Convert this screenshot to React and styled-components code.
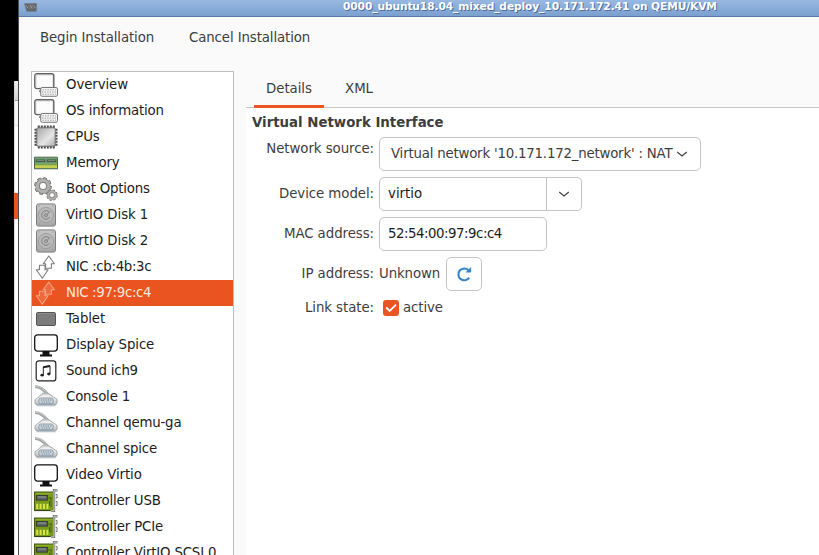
import React from 'react';
import styled, { createGlobalStyle } from 'styled-components';

const ORANGE = '#e95420';

const GlobalStyle = createGlobalStyle`
  * { box-sizing: border-box; }
  html, body { margin: 0; padding: 0; overflow: hidden; }
  body {
    font-family: "DejaVu Sans", sans-serif;
    font-size: 13.333px;
    line-height: 16px;
    color: #3d3d3d;
    white-space: nowrap;
  }
  svg { display: block; flex: none; }
`;

const Desktop = styled.div`
  display: flex;
  width: 819px;
  height: 555px;
  overflow: hidden;
  background: #000;
`;

const Backdrop = styled.div`
  width: 14px;
  flex: none;
  background: #000;
`;

const RearWindow = styled.div`
  width: 4px;
  flex: none;
  display: flex;
  flex-direction: column;
  margin-top: 81px;
  border-left: 1px solid #d8d8d8;
  background: #fff;
`;

const RearTitle = styled.div`
  height: 20px;
  background: linear-gradient(#f2f2f2, #d2d2d2);
  border-bottom: 1px solid #999;
`;

const RearToolbar = styled.div`
  height: 25px;
  background: #f6f6f6;
  border-bottom: 1px solid #ddd;
`;

const RearSelection = styled.div`
  height: 26px;
  margin: 67px 0 0 -1px;
  background: ${ORANGE};
`;

const Window = styled.main`
  flex: 1;
  min-width: 0;
  display: flex;
  flex-direction: column;
  border-left: 1px solid #4c4c4c;
  background: #fafafa;
`;

const TitleBar = styled.header`
  display: flex;
  align-items: flex-start;
  height: 17px;
  flex: none;
  padding: 3px 0 0 5px;
  background: linear-gradient(#98b8e2, #7ba0cf);
  border-bottom: 1px solid #567aa5;
`;

const Title = styled.h1`
  margin: -3px 0 0 305px;
  font-size: 10.667px;
  line-height: 14px;
  font-weight: bold;
  letter-spacing: -0.11px;
  color: #fff;
  text-shadow: 1px 1px 0 #4d6c96;
`;

const Toolbar = styled.nav`
  display: flex;
  flex: none;
  height: 54px;
  padding: 13px 0 0 21px;
  gap: 35px;
`;

const ToolButton = styled.button`
  padding: 0;
  height: 16px;
  border: 0;
  background: none;
  font: inherit;
  letter-spacing: -0.11px;
  color: #3d3d3d;
`;

const Body = styled.div`
  display: flex;
  flex: 1;
  min-height: 0;
  padding-left: 12px;
`;

const DeviceList = styled.ul`
  width: 203px;
  height: 500px;
  flex: none;
  margin: 0;
  padding: 0;
  list-style: none;
  border: 1px solid #bdbdbd;
  background: #fff;
`;

const DeviceRow = styled.li`
  display: flex;
  align-items: center;
  gap: 8px;
  height: 26px;
  padding-left: 2px;
  color: ${p => (p.$selected ? '#ffe9df' : '#1c1c1c')};
  background: ${p => (p.$selected ? ORANGE : 'transparent')};
`;

const DeviceName = styled.span`
  line-height: 16px;
  letter-spacing: ${p => p.$tracking}px;
`;

const Details = styled.section`
  flex: 1;
  min-width: 0;
  margin-left: 12px;
  display: flex;
  flex-direction: column;
`;

const Tabs = styled.div`
  display: flex;
  height: 37px;
  flex: none;
  padding-left: 8px;
  border-bottom: 1px solid #c6c6c6;
`;

const Tab = styled.button`
  width: 70px;
  height: 37px;
  padding: 1px 0 0;
  border: 0;
  border-bottom: 3px solid ${p => (p.$active ? ORANGE : 'transparent')};
  background: none;
  font: inherit;
  letter-spacing: -0.05px;
  color: #3d3d3d;
`;

const Panel = styled.div`
  flex: 1;
  padding: 7px 0 0 6px;
  background: #fff;
`;

const SectionTitle = styled.h2`
  margin: 0 0 6px;
  font-size: 13.333px;
  line-height: 16px;
  font-weight: bold;
`;

const Form = styled.div`
  display: grid;
  grid-template-columns: 122px auto;
  grid-template-rows: 34px 34px 34px 34px 22px;
  column-gap: 5px;
  row-gap: 6px;
  align-items: center;
`;

const Label = styled.label`
  justify-self: end;
  padding-bottom: ${p => (p.$raised ? 11 : 0)}px;
  letter-spacing: -0.06px;
`;

const Field = styled.div`
  display: flex;
  align-items: center;
  letter-spacing: -0.1px;
`;

const Box = styled.div`
  display: flex;
  align-items: center;
  height: 34px;
  border: 1px solid #c4c4c4;
  border-radius: 5px;
  background: #fff;
`;

const Select = styled(Box)`
  width: 322px;
  padding-left: 11px;
  gap: 4px;
  letter-spacing: -0.2px;
`;

const Entry = styled(Box)`
  width: 168px;
  padding-left: 8px;
  color: #1c1c1c;
  letter-spacing: ${p => p.$tracking}px;
  border-radius: ${p => (p.$joined ? '5px 0 0 5px' : '5px')};
`;

const DropButton = styled(Box)`
  width: 35px;
  justify-content: center;
  border-left: 0;
  border-radius: 0 5px 5px 0;
`;

const IconButton = styled(Box)`
  width: 36px;
  margin-left: 6px;
  justify-content: center;
`;

const Check = styled.span`
  display: flex;
  width: 16px;
  height: 16px;
  margin: 0 4px;
  border-radius: 3px;
  background: ${ORANGE};
`;

const Chevron = () => (
  <svg width="12" height="12" viewBox="0 0 12 12" fill="none" stroke="#3d3d3d" strokeWidth="1.1">
    <path d="M1.2 4 L6 8 L10.8 4" />
  </svg>
);

const Icon = ({ children }) => (
  <svg width="24" height="24" viewBox="0 0 24 24">{children}</svg>
);

const Computer = () => (
  <Icon>
    <rect x=".8" y=".8" width="19" height="14.8" rx="2" fill="#fff" stroke="#606060" strokeWidth="1.4" />
    <rect x="2.3" y="2.3" width="16" height="11.8" fill="#fcfcfc" stroke="#ddd" strokeWidth=".6" />
    <path d="M6.5 18.2 H5" stroke="#555" strokeWidth="1.3" />
    <rect x="6.7" y="14.5" width="16.8" height="8.8" rx="1.5" fill="#f4f4f4" stroke="#777" />
    <path d="M8.5 16.8H22M8 19H22M8.5 21.2H22" stroke="#999" strokeWidth=".9" strokeDasharray="1.5 1" />
  </Icon>
);

const Cpu = () => (
  <Icon>
    <defs>
      <linearGradient id="chip" x1="0" y1="0" x2="1" y2="1">
        <stop offset="0" stopColor="#a5a5a5" /><stop offset=".6" stopColor="#e6e6e6" /><stop offset="1" stopColor="#aaa" />
      </linearGradient>
    </defs>
    <path d="M3.8 2H21M3.8 22H21" stroke="#4d4d4d" strokeWidth="3" strokeDasharray="2 1" />
    <path d="M2 3.8V21M22 3.8V21" stroke="#4d4d4d" strokeWidth="3" strokeDasharray="2 1" />
    <rect x="2.8" y="2.8" width="18.4" height="18.4" rx="1.5" fill="url(#chip)" stroke="#707070" />
  </Icon>
);

const Memory = () => (
  <Icon>
    <path d="M.5 6.2H23.5V17.8H.5Z" fill="#5f9466" stroke="#4a6b4a" />
    <path d="M1 7.3H23" stroke="#7fa67c" strokeWidth="1" />
    <path d="M2 9.8H11M13 9.8H22" stroke="#4a5a4e" strokeWidth="2.4" />
    <path d="M3 9.5H10M14 9.5H21" stroke="#788a7a" />
    <path d="M1 12.5H23" stroke="#7aa765" strokeWidth="1.4" />
    <path d="M1 15.4H23" stroke="#a3b83e" strokeWidth="3.4" />
    <path d="M1.5 15.8H23" stroke="#d9de62" strokeWidth="2.4" strokeDasharray="1.2 .8" />
  </Icon>
);

const Gear = ({ x, y, s }) => (
  <g transform={`translate(${x} ${y}) scale(${s})`}>
    <circle r="7.3" fill="none" stroke="#646462" strokeWidth="3.4" strokeDasharray="3.3 2.434" />
    <circle r="5.5" fill="none" stroke="#6b6b69" strokeWidth="4.6" />
    <circle r="5.7" fill="none" stroke="#b3b2ae" strokeWidth="3.2" />
    <circle r="7.3" fill="none" stroke="#aeada9" strokeWidth="2" strokeDasharray="1.9 3.834" strokeDashoffset="-.7" />
    <circle r="3.7" fill="#fff" stroke="#777" strokeWidth=".9" />
  </g>
);

const Gears = () => (
  <Icon><Gear x={9} y={9} s={0.98} /><Gear x={18} y={18.2} s={0.63} /></Icon>
);

const Disk = () => (
  <Icon>
    <defs>
      <linearGradient id="disk" x1="0" y1="0" x2="0" y2="1">
        <stop offset="0" stopColor="#c6c6c6" /><stop offset="1" stopColor="#a8a8a8" />
      </linearGradient>
    </defs>
    <rect x="2.5" y=".9" width="19" height="22.2" rx="2" fill="url(#disk)" stroke="#7e7e7e" />
    <circle cx="12" cy="12" r="7.6" fill="#b9b9b9" stroke="#909090" strokeWidth=".7" />
    <path d="M15.5 9.5A4.3 4.3 0 1 0 15.8 14" fill="none" stroke="#7d7d7d" />
    <path d="M12 12.5L16.5 8" stroke="#898989" />
    <circle cx="12" cy="12.2" r="1.6" fill="#a8a8a8" stroke="#777" strokeWidth=".7" />
    <path d="M4.5 3h1M18.5 3h1M4.5 21h1M18.5 21h1" stroke="#8a8a8a" />
  </Icon>
);

const Network = ({ selected }) => (
  <Icon>
    <g fill={selected ? '#ec6a3c' : '#fff'} stroke={selected ? '#f4a482' : '#7c7c7c'} strokeWidth="1.1" strokeLinejoin="round">
      <path d="M14.8 1L20.4 8.8H17.4V13.2H11.6V8.8H9.2Z" />
      <path d="M8.3 23.2L2.3 14.8H5.4V10.2H11V14.8H14.1Z" />
    </g>
  </Icon>
);

const Tablet = () => (
  <Icon>
    <rect x="2.5" y="5.5" width="19" height="13" rx="1.3" fill="#7c7c7c" stroke="#555" />
    <path d="M3.5 6.5H20.5" stroke="#8c8c8c" />
  </Icon>
);

const Monitor = () => (
  <Icon>
    <rect x=".7" y="1.9" width="22.6" height="16.2" rx="2.8" fill="#fff" stroke="#111" strokeWidth="1.3" />
    <path d="M8.5 18H15.5V21.6H18V23.6H6V21.6H8.5Z" fill="#111" />
  </Icon>
);

const Sound = () => (
  <Icon>
    <rect x="2.2" y="1.9" width="19.6" height="20" rx="2.5" fill="#fff" stroke="#222" strokeWidth="1.2" />
    <path d="M9.3 16V8L16 6.8V14.8" fill="none" stroke="#222" strokeWidth="1" />
    <path d="M9.3 8.2L16 7" stroke="#222" strokeWidth="2" />
    <ellipse cx="8.1" cy="16.2" rx="1.7" ry="1.4" fill="#222" />
    <ellipse cx="14.8" cy="15" rx="1.7" ry="1.4" fill="#222" />
  </Icon>
);

const Serial = () => (
  <Icon>
    <defs>
      <linearGradient id="plug" x1="0" y1="0" x2="0" y2="1">
        <stop offset="0" stopColor="#c9cccc" /><stop offset=".5" stopColor="#eeeeee" /><stop offset="1" stopColor="#b4b7b8" />
      </linearGradient>
    </defs>
    <path d="M1 1.6C6 1.4 9 4 13.5 9" fill="none" stroke="#a2a6a4" strokeWidth="2.8" />
    <path d="M1 1.2C6 1 9.3 3.6 13.5 8.4" fill="none" stroke="#c9cccb" strokeWidth="1" />
    <path d="M1.2 14.5C5.5 12 7.5 8 11 7.8C15 7.6 18 11.3 22.8 14Q24 18 22 19.6H2Q.3 18 1.2 14.5Z" fill="url(#plug)" stroke="#9b9f9f" strokeWidth=".9" />
    <path d="M4 13.6L9 10.2H15L20 13.6Z" fill="#f0f0ef" />
    <rect x="4.8" y="13" width="14.4" height="5.8" rx="2" fill="#ccd4db" stroke="#8494a3" strokeWidth=".9" />
    <path d="M6.8 15H18M7.6 17H17" stroke="#70859a" strokeDasharray="1.3 1" />
    <path d="M2.5 20.7H21.5" stroke="#a9bac9" strokeWidth="1.1" />
  </Icon>
);

const Card = () => (
  <Icon>
    <rect x=".5" y="3" width="19" height="18.6" fill="#789b1d" stroke="#425914" />
    <path d="M2 4.6H19" stroke="#90b130" />
    <rect x="2.4" y="6.5" width="11" height="4.6" fill="#5f6664" stroke="#343c35" />
    <path d="M4 8H12" stroke="#a4a8a4" strokeWidth=".8" />
    <path d="M13.5 9H18M15.5 12V17M17 9V18" stroke="#41601a" strokeWidth=".9" />
    <path d="M2.2 17.4H15" stroke="#d9e63e" strokeWidth="5.4" strokeDasharray="2 1.4" />
    <path d="M1 21.5H16" stroke="#34441c" />
    <path d="M23.5 1.2H20V21.8H17" fill="none" stroke="#737773" strokeWidth="2.4" />
    <path d="M23.5 1.2H20V21.8H17" fill="none" stroke="#c6cac4" strokeWidth="1" />
    <path d="M21.8 5.5H23V9H21.8M21.8 12.5H23V16.5H21.8" fill="none" stroke="#6b706b" />
  </Icon>
);

const DEVICES = [
  { name: 'Overview', glyph: Computer, tracking: -0.1 },
  { name: 'OS information', glyph: Computer, tracking: -0.16 },
  { name: 'CPUs', glyph: Cpu, tracking: -0.1 },
  { name: 'Memory', glyph: Memory, tracking: -0.1 },
  { name: 'Boot Options', glyph: Gears, tracking: -0.22 },
  { name: 'VirtIO Disk 1', glyph: Disk, tracking: -0.08 },
  { name: 'VirtIO Disk 2', glyph: Disk, tracking: -0.08 },
  { name: 'NIC :cb:4b:3c', glyph: Network, tracking: -0.32 },
  { name: 'NIC :97:9c:c4', glyph: Network, tracking: -0.33 },
  { name: 'Tablet', glyph: Tablet, tracking: -0.1 },
  { name: 'Display Spice', glyph: Monitor, tracking: -0.1 },
  { name: 'Sound ich9', glyph: Sound, tracking: -0.23 },
  { name: 'Console 1', glyph: Serial, tracking: -0.18 },
  { name: 'Channel qemu-ga', glyph: Serial, tracking: -0.21 },
  { name: 'Channel spice', glyph: Serial, tracking: -0.2 },
  { name: 'Video Virtio', glyph: Monitor, tracking: -0.07 },
  { name: 'Controller USB', glyph: Card, tracking: -0.18 },
  { name: 'Controller PCIe', glyph: Card, tracking: -0.15 },
  { name: 'Controller VirtIO SCSI 0', glyph: Card, tracking: -0.18 },
];

export default function App() {
  const selectedName = 'NIC :97:9c:c4';
  return (
    <>
      <GlobalStyle />
      <Desktop>
        <Backdrop />
        <RearWindow><RearTitle /><RearToolbar /><RearSelection /></RearWindow>
        <Window>
          <TitleBar>
            <svg width="14" height="10" viewBox="0 0 14 10">
              <path d="M.5 .5H6L7 6H2ZM4.5 .5H9V6H5ZM8 .5H12.5V6H8Z" fill="#5d6266" stroke="#777d82" strokeWidth=".7" />
              <path d="M2 6H12.5V8.5H2.5Z" fill="#62686c" />
              <path d="M2 2.5L4 5M6 2L8 5M9.5 2.5L11.5 5" stroke="#a99f8e" />
            </svg>
            <Title>0000_ubuntu18.04_mixed_deploy_10.171.172.41 on QEMU/KVM</Title>
          </TitleBar>
          <Toolbar>
            <ToolButton>Begin Installation</ToolButton>
            <ToolButton>Cancel Installation</ToolButton>
          </Toolbar>
          <Body>
            <DeviceList>
              {DEVICES.map(({ name, glyph: Glyph, tracking }) => (
                <DeviceRow key={name} $selected={name === selectedName}>
                  <Glyph selected={name === selectedName} />
                  <DeviceName $tracking={tracking}>{name}</DeviceName>
                </DeviceRow>
              ))}
            </DeviceList>
            <Details>
              <Tabs>
                <Tab $active>Details</Tab>
                <Tab>XML</Tab>
              </Tabs>
              <Panel>
                <SectionTitle>Virtual Network Interface</SectionTitle>
                <Form>
                  <Label $raised>Network source:</Label>
                  <Field><Select>Virtual network '10.171.172_network' : NAT<Chevron /></Select></Field>
                  <Label>Device model:</Label>
                  <Field><Entry $joined $tracking={0}>virtio</Entry><DropButton><Chevron /></DropButton></Field>
                  <Label>MAC address:</Label>
                  <Field><Entry $tracking={-0.48}>52:54:00:97:9c:c4</Entry></Field>
                  <Label>IP address:</Label>
                  <Field>
                    Unknown
                    <IconButton>
                      <svg width="16" height="16" viewBox="0 0 16 16">
                        <path d="M12.4 4.2A5.9 5.9 0 1 0 13.2 11.6" fill="none" stroke="#3584c8" strokeWidth="2.1" />
                        <path d="M15.1 1V6.6H9.5Z" fill="#3584c8" />
                      </svg>
                    </IconButton>
                  </Field>
                  <Label>Link state:</Label>
                  <Field>
                    <Check>
                      <svg width="16" height="16" viewBox="0 0 16 16" fill="none" stroke="#fff" strokeWidth="1.8">
                        <path d="M3.2 7.5L6.7 11L13 4.7" />
                      </svg>
                    </Check>
                    active
                  </Field>
                </Form>
              </Panel>
            </Details>
          </Body>
        </Window>
      </Desktop>
    </>
  );
}
